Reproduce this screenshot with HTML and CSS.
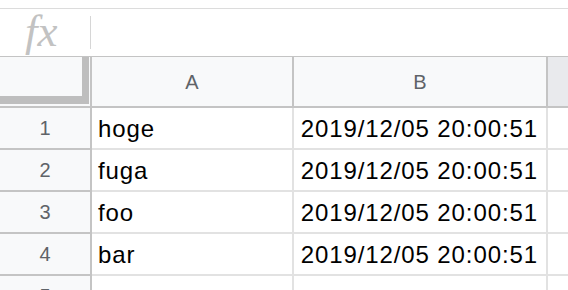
FILE: index.html
```html
<!DOCTYPE html>
<html lang="en">
<head>
  <meta charset="UTF-8">
  <meta name="viewport" content="width=device-width, initial-scale=1.0">
  <title>Sheet</title>
  <link rel="stylesheet" href="styles.css">
</head>
<body>
  <div class="formula-bar">
    <div class="fx">fx</div>
    <div class="fx-divider"></div>
    <div class="formula-input"></div>
  </div>

  <div class="grid">
    <div class="corner"><div class="freeze"></div></div>
    <div class="col-head">A</div>
    <div class="col-head">B</div>
    <div class="col-head col-rest"></div>

    <div class="row-head">1</div>
    <div class="cell">hoge</div>
    <div class="cell num">2019/12/05 20:00:51</div>
    <div class="cell rest"></div>

    <div class="row-head">2</div>
    <div class="cell">fuga</div>
    <div class="cell num">2019/12/05 20:00:51</div>
    <div class="cell rest"></div>

    <div class="row-head">3</div>
    <div class="cell">foo</div>
    <div class="cell num">2019/12/05 20:00:51</div>
    <div class="cell rest"></div>

    <div class="row-head">4</div>
    <div class="cell">bar</div>
    <div class="cell num">2019/12/05 20:00:51</div>
    <div class="cell rest"></div>

    <div class="row-head">5</div>
    <div class="cell"></div>
    <div class="cell num"></div>
    <div class="cell rest"></div>
  </div>
</body>
</html>
```

FILE: styles.css
```css
body {
  margin: 0;
  font-family: "Liberation Sans", Arial, sans-serif;
  background-color: #fff;
  overflow: hidden;
}

.formula-bar {
  margin-top: 8px;
  height: 47px;
  border-top: 1px solid #dcdcdc;
  border-bottom: 1px solid #c4c4c4;
  display: flex;
  align-items: center;
}

.fx {
  width: 90px;
  padding-left: 25px;
  box-sizing: border-box;
  font-family: "Liberation Serif", "Times New Roman", serif;
  font-style: italic;
  font-size: 45px;
  line-height: 44px;
  color: #c2c2c2;
  margin-top: -4px;
}

.fx-divider {
  width: 1px;
  height: 33px;
  background-color: #d6d6d6;
}

.formula-input {
  flex-grow: 1;
}

.grid {
  display: grid;
  grid-template-columns: 92px 202px 254px 1fr;
  grid-template-rows: 51px repeat(5, 42px);
}

.grid > div {
  box-sizing: border-box;
}

.corner,
.col-head,
.row-head {
  background-color: #f8f9fa;
  border-right: 2px solid #c4c4c4;
  border-bottom: 2px solid #c4c4c4;
  color: #5f6368;
  font-size: 20px;
  display: flex;
  align-items: center;
  justify-content: center;
}

.col-head {
  padding-top: 2px;
}

.col-rest {
  background-color: #e9eaed;
  border-right: none;
}

.corner {
  align-items: flex-start;
  justify-content: flex-start;
}

.freeze {
  width: 89px;
  height: 47px;
  border-right: 7px solid #bebebe;
  border-bottom: 8px solid #bebebe;
  box-sizing: border-box;
}

.cell {
  border-right: 2px solid #e2e2e2;
  border-bottom: 2px solid #e2e2e2;
  font-size: 24px;
  letter-spacing: 0.9px;
  color: #000;
  padding: 0 6px;
  display: flex;
  align-items: center;
  padding-top: 1px;
}

.num {
  justify-content: flex-end;
  padding-right: 8px;
}

.rest {
  border-right: none;
}
```
